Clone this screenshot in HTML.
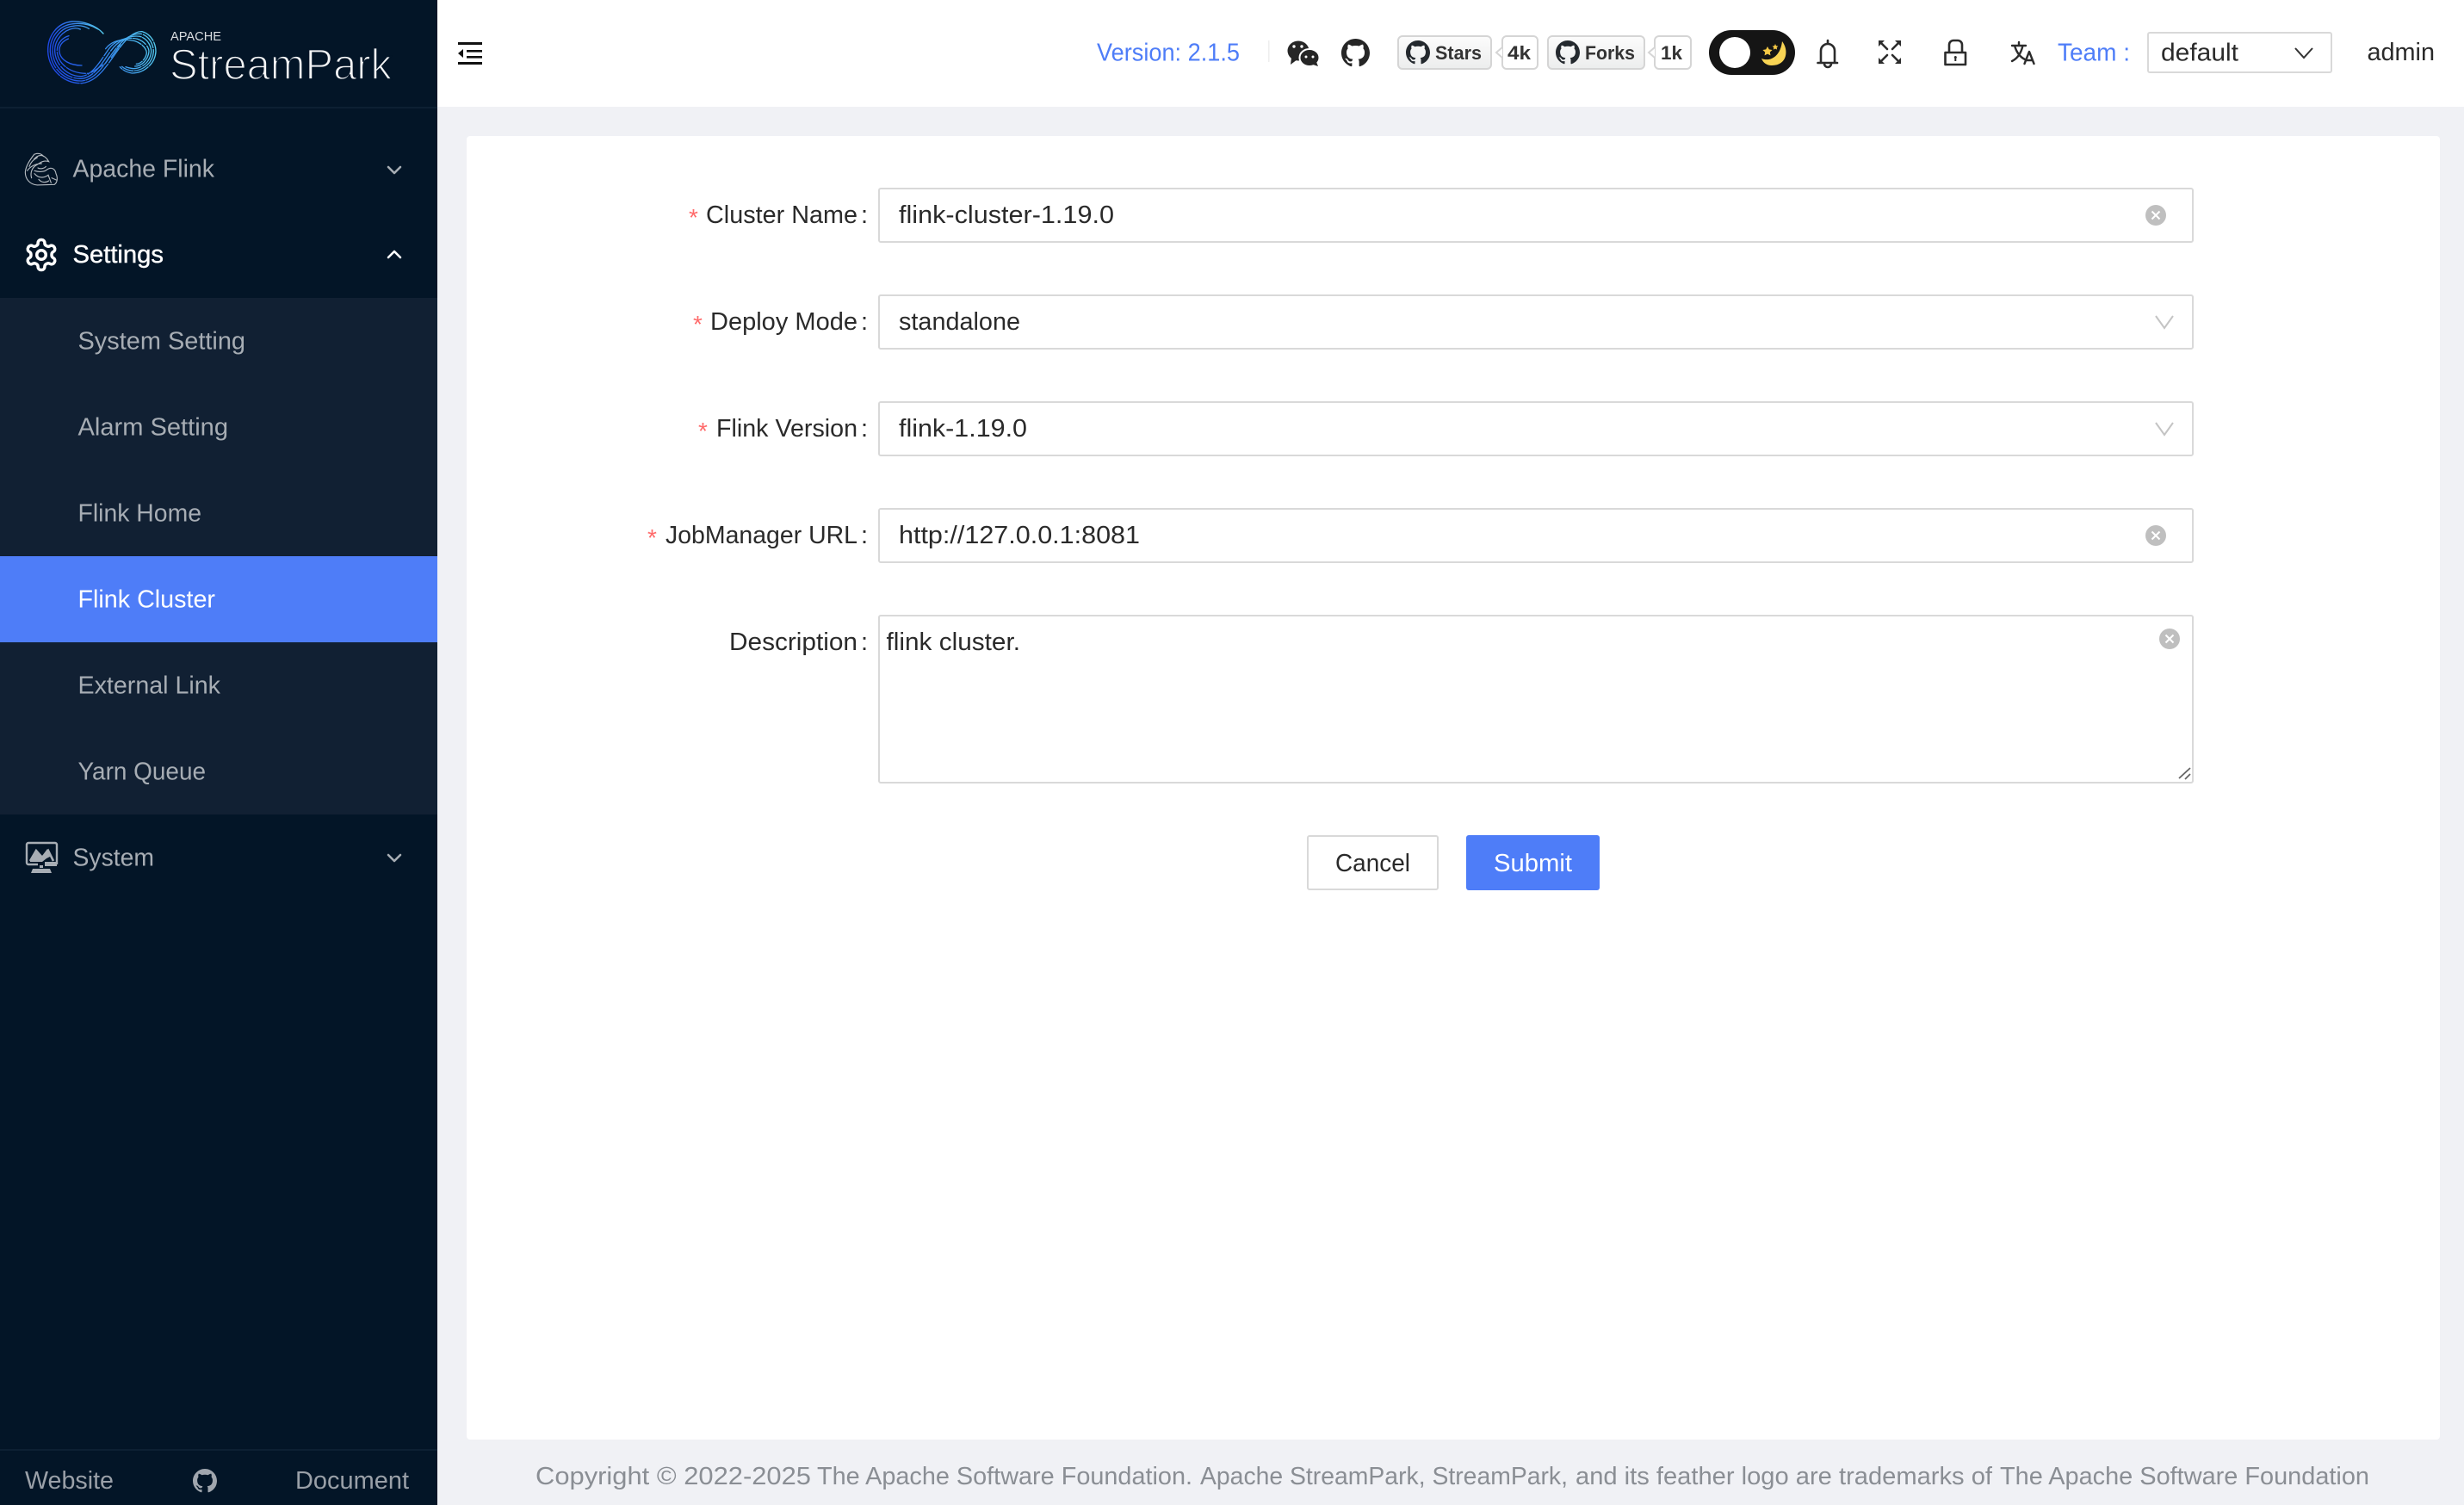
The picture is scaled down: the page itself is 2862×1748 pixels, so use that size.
<!DOCTYPE html>
<html>
<head>
<meta charset="utf-8">
<title>StreamPark</title>
<style>
html,body{margin:0;padding:0;background:#f0f1f5;width:2862px;height:1748px;overflow:hidden}
svg{display:block}
text{font-family:"Liberation Sans",sans-serif;font-size:29px;fill:#2a2a2a}
.m{fill:#a7adb4}
.f{fill:#9aa0a8}
.b{font-size:22px;font-weight:700;fill:#333}
.s{fill:#ff6b6b;font-size:28px}
.i{fill:none;stroke:#2c2c2c;stroke-width:2.6;stroke-linecap:round;stroke-linejoin:round}
</style>
</head>
<body>
<svg width="2862" height="1748" viewBox="0 0 2862 1748" xmlns="http://www.w3.org/2000/svg">
<defs>
<linearGradient id="lg" gradientUnits="userSpaceOnUse" x1="60" y1="240" x2="420" y2="110">
<stop offset="0" stop-color="#1e44e8"/><stop offset=".45" stop-color="#2f7cec"/><stop offset="1" stop-color="#56ccee"/>
</linearGradient>
<linearGradient id="lg2" gradientUnits="userSpaceOnUse" x1="60" y1="100" x2="240" y2="70">
<stop offset="0" stop-color="#1e4ae8"/><stop offset="1" stop-color="#56ccee"/>
</linearGradient>
<linearGradient id="btn" x1="0" y1="0" x2="0" y2="1"><stop offset="0" stop-color="#fcfcfc"/><stop offset="1" stop-color="#eceded"/></linearGradient>
<symbol id="gh" viewBox="0 0 16 16"><path fill-rule="evenodd" d="M8 0C3.58 0 0 3.58 0 8c0 3.54 2.29 6.53 5.47 7.59.4.07.55-.17.55-.38 0-.19-.01-.82-.01-1.49-2.01.37-2.53-.49-2.69-.94-.09-.23-.48-.94-.82-1.13-.28-.15-.68-.52-.01-.53.63-.01 1.08.58 1.23.82.72 1.21 1.87.87 2.33.66.07-.52.28-.87.51-1.07-1.78-.2-3.64-.89-3.64-3.95 0-.87.31-1.59.82-2.15-.08-.2-.36-1.02.08-2.12 0 0 .67-.21 2.2.82.64-.18 1.32-.27 2-.27.68 0 1.36.09 2 .27 1.53-1.04 2.2-.82 2.2-.82.44 1.1.16 1.92.08 2.12.51.56.82 1.27.82 2.15 0 3.07-1.87 3.75-3.65 3.95.29.25.54.73.54 1.48 0 1.07-.01 1.93-.01 2.2 0 .21.15.46.55.38A8.013 8.013 0 0016 8c0-4.42-3.58-8-8-8z"/></symbol>
<g id="clr"><circle r="12" fill="#bfbfbf"/><path d="M-4.5-4.5L4.5 4.5M4.5-4.5L-4.5 4.5" stroke="#fff" stroke-width="2" fill="none"/></g>
</defs>

<!-- backgrounds -->
<rect width="2862" height="1748" fill="#f0f1f5"/>
<rect x="508" width="2354" height="124" fill="#fff"/>
<rect x="542" y="158" width="2292" height="1514" rx="4" fill="#fff"/>

<!-- sidebar -->
<rect width="508" height="1748" fill="#031527"/>
<rect y="124" width="508" height="2" fill="#0d2033"/>
<rect y="346" width="508" height="600" fill="#112033"/>
<rect y="646" width="508" height="100" fill="#4e7df8"/>
<rect y="1683" width="508" height="2" fill="#0d2033"/>

<!-- logo -->
<g transform="translate(40 10) scale(.3333)" fill="none" stroke="url(#lg)" stroke-width="4" stroke-linecap="round">
<path stroke="url(#lg2)" d="M240 87C215 58 170 43 130 45C80 50 45 95 47 150" stroke-width="4.200"/>
<path d="M47 150C50 215 105 262 165 260C215 255 245 210 280 160C310 118 340 78 375 80C410 90 423 125 423 150C420 195 380 225 340 225C320 222 305 212 298 203" stroke-dasharray="95 5 70 5 120 6 60 5 150 6 90 5"/>
<path stroke="url(#lg2)" d="M222 72C195 55 165 50 135 53C85 58 53 100 55 150"/>
<path d="M55 150C58 210 108 254 165 252C210 247 237 205 272 155C302 112 338 84 372 88C402 96 415 128 415 150C412 190 378 217 342 217C325 215 312 208 305 202" stroke-dasharray="60 6 110 5 80 6 70 5 100 6"/>
<path stroke="url(#lg2)" d="M190 70C170 58 150 58 135 61C92 66 61 105 63 150"/>
<path d="M63 150C66 205 112 246 165 244C205 239 230 200 264 150C294 106 335 92 368 97C394 105 407 130 407 150C404 185 375 209 345 209C335 208 325 206 318 203" stroke-dasharray="120 6 70 5 90 6 60 5 60 5"/>
<path stroke="url(#lg2)" d="M160 72C150 68 140 68 135 69C100 75 69 110 71 150"/>
<path d="M71 150C74 198 118 238 165 236C200 231 222 195 256 145C286 100 335 100 360 106C385 115 399 135 399 150C396 180 372 201 350 201" stroke-dasharray="50 7 100 6 80 6 120 5"/>
<path d="M120 95C100 100 77 120 79 150C82 190 122 228 188 226" stroke-dasharray="70 6 60 5"/>
<path d="M248 140C278 100 330 108 350 113C372 120 391 138 391 155C388 175 370 193 355 193" stroke-dasharray="60 6 70 5"/>
<path d="M118 105C95 115 85 130 87 150C90 180 125 198 165 198M240 195L200 222M262 168L248 190M300 125L268 170"/>
</g>
<text x="198" y="47" textLength="59" lengthAdjust="spacingAndGlyphs" style="font-size:15px;fill:#d9dde0">APACHE</text>
<text x="197" y="92" textLength="258" lengthAdjust="spacingAndGlyphs" style="font-size:50px;fill:#f3f4f5;stroke:#031527;stroke-width:1.700px">StreamPark</text>

<!-- menu -->
<g fill="none" stroke="#b4bac0" stroke-linecap="round" transform="translate(20 165) scale(.3333)">
<path stroke-width="3.400" d="M60 42C50 55 30 80 28 105C28 130 45 148 70 150L130 148C140 140 142 125 135 110C133 95 120 85 105 95C95 105 75 105 60 100"/>
<path stroke-width="3.400" d="M58 60C75 40 95 42 110 68C90 62 80 72 60 85C50 95 45 110 50 125M35 100C45 85 65 75 85 75M60 110C75 128 95 125 108 115L118 142M62 42C72 38 84 40 92 50M42 85C48 70 55 62 70 54M75 130C85 142 100 142 110 135M120 125L136 132M72 90C80 95 95 92 100 85"/>
</g>
<g transform="translate(27 275) scale(1.75)" fill="none" stroke="#fff" stroke-width="2" stroke-linecap="round" stroke-linejoin="round">
<path d="M12.22 2h-.44a2 2 0 0 0-2 2v.18a2 2 0 0 1-1 1.73l-.43.25a2 2 0 0 1-2 0l-.15-.08a2 2 0 0 0-2.73.73l-.22.38a2 2 0 0 0 .73 2.73l.15.1a2 2 0 0 1 1 1.72v.51a2 2 0 0 1-1 1.74l-.15.09a2 2 0 0 0-.73 2.73l.22.38a2 2 0 0 0 2.73.73l.15-.08a2 2 0 0 1 2 0l.43.25a2 2 0 0 1 1 1.73V20a2 2 0 0 0 2 2h.44a2 2 0 0 0 2-2v-.18a2 2 0 0 1 1-1.73l.43-.25a2 2 0 0 1 2 0l.15.08a2 2 0 0 0 2.73-.73l.22-.39a2 2 0 0 0-.73-2.73l-.15-.08a2 2 0 0 1-1-1.74v-.5a2 2 0 0 1 1-1.74l.15-.09a2 2 0 0 0 .73-2.73l-.22-.38a2 2 0 0 0-2.73-.73l-.15.08a2 2 0 0 1-2 0l-.43-.25a2 2 0 0 1-1-1.73V4a2 2 0 0 0-2-2z"/><circle cx="12" cy="12" r="3"/>
</g>
<!-- system icon -->
<g fill="none" stroke="#a7adb4" stroke-width="2.4">
<path d="M66 1004V981a2 2 0 0 0-2-2H33a2 2 0 0 0-2 2V1002a2 2 0 0 0 2 2H44"/>
<path d="M35 1000L42 988L49 996L56 988L62 1000" stroke-width="2.6"/>
</g>
<path fill="#a7adb4" d="M35 999L42 987L49 994L55 986L60 994L54 997L49 1001H35ZM52 1001H66V1006H52ZM46 1005H50V1008H46ZM38 1009H58L60 1014H36Z"/>

<text class="m" x="84.500" y="205.500" textLength="164.500" lengthAdjust="spacingAndGlyphs">Apache Flink</text>
<text x="84.500" y="305" textLength="105.500" lengthAdjust="spacingAndGlyphs" style="fill:#fff;stroke:#fff;stroke-width:.4px">Settings</text>
<text class="m" x="90.500" y="405.500" textLength="194.500" lengthAdjust="spacingAndGlyphs">System Setting</text>
<text class="m" x="90.500" y="505.500" textLength="174.500" lengthAdjust="spacingAndGlyphs">Alarm Setting</text>
<text class="m" x="90.500" y="605.500" textLength="143.500" lengthAdjust="spacingAndGlyphs">Flink Home</text>
<text x="90.500" y="705.500" textLength="159.500" lengthAdjust="spacingAndGlyphs" style="fill:#fff">Flink Cluster</text>
<text class="m" x="90.500" y="805.500" textLength="165.500" lengthAdjust="spacingAndGlyphs">External Link</text>
<text class="m" x="90.500" y="905.500" textLength="148.500" lengthAdjust="spacingAndGlyphs">Yarn Queue</text>
<text class="m" x="84.500" y="1005.500" textLength="94.500" lengthAdjust="spacingAndGlyphs">System</text>
<g fill="none" stroke-width="2.6" stroke-linecap="round" stroke-linejoin="round">
<path stroke="#a7adb4" d="M451 194L458 201L465 194"/>
<path stroke="#fff" d="M451 299L458 292L465 299"/>
<path stroke="#a7adb4" d="M451 993L458 1000L465 993"/>
</g>
<text class="f" x="29" y="1729" textLength="103" lengthAdjust="spacingAndGlyphs">Website</text>
<use href="#gh" x="224" y="1706" width="28" height="28" fill="#a0a6ae"/>
<text class="f" x="343" y="1729" textLength="132" lengthAdjust="spacingAndGlyphs">Document</text>

<!-- header -->
<g fill="#111">
<rect x="532" y="49" width="28" height="3"/><rect x="542" y="58" width="18" height="2.6"/><rect x="542" y="65" width="18" height="2.6"/><rect x="532" y="72" width="28" height="3"/><path d="M538 57V67L532 62Z"/>
</g>
<text x="1274" y="70.500" textLength="166" lengthAdjust="spacingAndGlyphs" style="fill:#4e7df8">Version: 2.1.5</text>
<rect x="1473" y="47" width="1.5" height="25" fill="#eee"/>
<!-- wechat -->
<g fill="#262626">
<ellipse cx="1508" cy="59" rx="12.500" ry="11.500"/><path d="M1500 67L1499 75L1507 69Z"/>
<ellipse cx="1521" cy="67" rx="11.500" ry="10" stroke="#fff" stroke-width="2"/><path d="M1525 75L1531 77L1529 72Z"/>
<circle cx="1503" cy="54" r="1.700" fill="#fff"/><circle cx="1512" cy="54" r="1.700" fill="#fff"/>
<circle cx="1517" cy="66" r="1.500" fill="#fff"/><circle cx="1525" cy="66" r="1.500" fill="#fff"/>
</g>
<use href="#gh" x="1558" y="45" width="33" height="33" fill="#262626"/>
<!-- stars -->
<rect x="1624" y="42" width="108" height="38" rx="5" fill="url(#btn)" stroke="#d5d5d5" stroke-width="2"/>
<use href="#gh" x="1633" y="47" width="28" height="28" fill="#24292e"/>
<text class="b" x="1667" y="69" textLength="54" lengthAdjust="spacingAndGlyphs">Stars</text>
<rect x="1745" y="42" width="41" height="38" rx="5" fill="#fff" stroke="#d5d5d5" stroke-width="2"/>
<path d="M1745 55L1738 61L1745 67" fill="#fff" stroke="#d5d5d5" stroke-width="2"/>
<rect x="1746" y="54" width="3" height="14" fill="#fff"/>
<text class="b" x="1751" y="69" textLength="27" lengthAdjust="spacingAndGlyphs">4k</text>
<rect x="1798" y="42" width="112" height="38" rx="5" fill="url(#btn)" stroke="#d5d5d5" stroke-width="2"/>
<use href="#gh" x="1807" y="47" width="28" height="28" fill="#24292e"/>
<text class="b" x="1841" y="69" textLength="58" lengthAdjust="spacingAndGlyphs">Forks</text>
<rect x="1922" y="42" width="42" height="38" rx="5" fill="#fff" stroke="#d5d5d5" stroke-width="2"/>
<path d="M1922 55L1915 61L1922 67" fill="#fff" stroke="#d5d5d5" stroke-width="2"/>
<rect x="1923" y="54" width="3" height="14" fill="#fff"/>
<text class="b" x="1929" y="69" textLength="25" lengthAdjust="spacingAndGlyphs">1k</text>
<!-- toggle -->
<rect x="1985" y="35" width="100" height="52" rx="26" fill="#151515"/>
<circle cx="2015" cy="61" r="18" fill="#fff"/>
<path fill="#f8d454" d="M2070 48C2078 58 2076 76 2058 76C2052 76 2048 73 2046 68C2056 72 2068 66 2070 48Z"/>
<path fill="#f6c945" d="M2053 54L2054.8 57.4L2058.6 58L2055.8 60.6L2056.5 64.4L2053 62.6L2049.5 64.4L2050.2 60.6L2047.4 58L2051.2 57.4ZM2062 51L2063 53.2L2065.4 53.6L2063.7 55.2L2064.1 57.6L2062 56.5L2059.9 57.6L2060.3 55.2L2058.6 53.6L2061 53.2Z"/>
<!-- bell -->
<path class="i" d="M2111.5 73H2134M2115 73V59a8 8 0 0 1 16 0V73M2123 47V50M2119 74a4 4 0 0 0 8 0"/>
<!-- fullscreen -->
<g class="i" style="stroke-width:2.6"><path d="M2186 51L2192 57M2204 51L2198 57M2186 70L2192 64M2204 70L2198 64"/></g>
<path fill="#2c2c2c" d="M2182 47H2189L2182 54ZM2208 47H2201L2208 54ZM2182 74H2189L2182 67ZM2208 74H2201L2208 67Z"/>
<!-- lock -->
<path class="i" d="M2259.500 61H2283V75H2259.500ZM2264 61V52a5 5 0 0 1 5-5H2274a5 5 0 0 1 5 5V61"/>
<path fill="#2c2c2c" d="M2271.300 65a1.600 1.600 0 0 1 1 2.800V71h-2v-3.200a1.600 1.600 0 0 1 1-2.800z"/>
<!-- translate -->
<g class="i" style="stroke-width:2.4"><path d="M2337 53H2353M2345 49V53M2340 53C2342 60 2346 66 2352 69M2349.500 53C2347.500 62 2343 68 2337 71"/><path d="M2351.500 74L2357 60L2362.500 74M2353.500 70H2360.500"/></g>
<text x="2390" y="70.500" textLength="84" lengthAdjust="spacingAndGlyphs" style="fill:#4e7df8">Team :</text>
<rect x="2495" y="38" width="213" height="46" rx="2" fill="#fff" stroke="#d9d9d9" stroke-width="2"/>
<text x="2510" y="70.500" textLength="90" lengthAdjust="spacingAndGlyphs">default</text>
<path d="M2666 56L2676 67L2686 56" fill="none" stroke="#333" stroke-width="2"/>
<text x="2749.500" y="70" textLength="78.500" lengthAdjust="spacingAndGlyphs">admin</text>

<!-- form -->
<g fill="#fff" stroke="#d9d9d9" stroke-width="2">
<rect x="1021" y="219" width="1526" height="62" rx="2"/>
<rect x="1021" y="343" width="1526" height="62" rx="2"/>
<rect x="1021" y="467" width="1526" height="62" rx="2"/>
<rect x="1021" y="591" width="1526" height="62" rx="2"/>
<rect x="1021" y="715" width="1526" height="194" rx="2"/>
</g>
<text class="s" x="800" y="262">*</text><text x="820" y="259" textLength="176" lengthAdjust="spacingAndGlyphs">Cluster Name</text><text x="1000" y="259">:</text>
<text class="s" x="805" y="386">*</text><text x="825" y="383" textLength="171" lengthAdjust="spacingAndGlyphs">Deploy Mode</text><text x="1000" y="383">:</text>
<text class="s" x="811" y="510">*</text><text x="832" y="507" textLength="164" lengthAdjust="spacingAndGlyphs">Flink Version</text><text x="1000" y="507">:</text>
<text class="s" x="752" y="634">*</text><text x="773" y="631" textLength="223" lengthAdjust="spacingAndGlyphs">JobManager URL</text><text x="1000" y="631">:</text>
<text x="847" y="755" textLength="149" lengthAdjust="spacingAndGlyphs">Description</text><text x="1000" y="755">:</text>

<text x="1044" y="259" textLength="250" lengthAdjust="spacingAndGlyphs">flink-cluster-1.19.0</text>
<text x="1044" y="383" textLength="141" lengthAdjust="spacingAndGlyphs">standalone</text>
<text x="1044" y="507" textLength="149" lengthAdjust="spacingAndGlyphs">flink-1.19.0</text>
<text x="1044" y="631" textLength="280" lengthAdjust="spacingAndGlyphs">http://127.0.0.1:8081</text>
<text x="1029.500" y="755" textLength="155.500" lengthAdjust="spacingAndGlyphs">flink cluster.</text>

<use href="#clr" transform="translate(2504 250)"/>
<use href="#clr" transform="translate(2504 622)"/>
<use href="#clr" transform="translate(2520 742)"/>
<g fill="none" stroke="#c4c4c4" stroke-width="2"><path d="M2504 367L2514 381L2524 367"/><path d="M2504 491L2514 505L2524 491"/></g>
<path d="M2531 904L2544 892M2538 905L2544 899" stroke="#666" stroke-width="1.800" fill="none"/>

<!-- buttons -->
<rect x="1519" y="971" width="151" height="62" rx="2" fill="#fff" stroke="#d9d9d9" stroke-width="2"/>
<rect x="1703" y="970" width="155" height="64" rx="3" fill="#4e7df8"/>
<text x="1551" y="1012" textLength="87" lengthAdjust="spacingAndGlyphs">Cancel</text>
<text x="1735" y="1012" textLength="91" lengthAdjust="spacingAndGlyphs" style="fill:#fff">Submit</text>

<!-- footer -->
<g style="fill:#8a8e94">
<text x="622" y="1724" textLength="320" lengthAdjust="spacingAndGlyphs" style="fill:#8a8e94">Copyright © 2022-2025</text>
<text x="949" y="1724" textLength="436" lengthAdjust="spacingAndGlyphs" style="fill:#8a8e94">The Apache Software Foundation.</text>
<text x="1394" y="1724" textLength="427" lengthAdjust="spacingAndGlyphs" style="fill:#8a8e94">Apache StreamPark, StreamPark,</text>
<text x="1830" y="1724" textLength="484" lengthAdjust="spacingAndGlyphs" style="fill:#8a8e94">and its feather logo are trademarks of</text>
<text x="2323" y="1724" textLength="429" lengthAdjust="spacingAndGlyphs" style="fill:#8a8e94">The Apache Software Foundation</text>
</g>
</svg>
</body>
</html>
